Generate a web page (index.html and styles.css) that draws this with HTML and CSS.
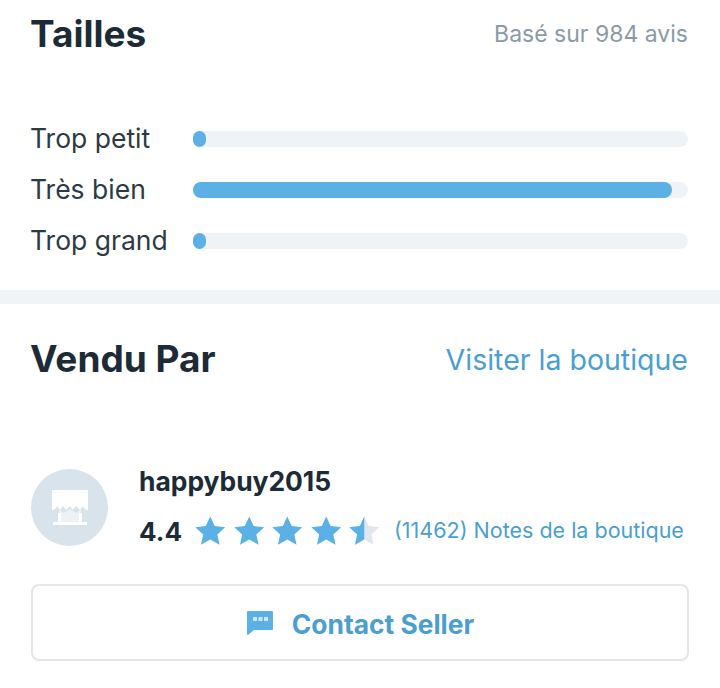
FILE: index.html
```html
<!DOCTYPE html>
<html lang="fr">
<head>
    <meta charset="UTF-8">
    <title>Tailles</title>
    <link rel="stylesheet" href="styles.css">
</head>
<body>
    <section class="sizes">
        <div class="section-head">
            <h2>Tailles</h2>
            <span class="review-count">Basé sur 984 avis</span>
        </div>
        <div class="size-rows">
            <div class="size-row">
                <span class="size-label">Trop petit</span>
                <div class="bar"><div class="bar-fill" style="width: 2.6%"></div></div>
            </div>
            <div class="size-row">
                <span class="size-label">Très bien</span>
                <div class="bar"><div class="bar-fill" style="width: 96.8%"></div></div>
            </div>
            <div class="size-row">
                <span class="size-label">Trop grand</span>
                <div class="bar"><div class="bar-fill" style="width: 2.6%"></div></div>
            </div>
        </div>
    </section>
    <section class="seller">
        <div class="section-head">
            <h2>Vendu Par</h2>
            <a class="shop-link">Visiter la boutique</a>
        </div>
        <div class="seller-info">
            <div class="avatar">
                <svg width="40" height="38" viewBox="0 0 40 38">
                    <path d="M2 1h36v20c-2 0-4-1-5-4l-3 4-4-4-3 4-3-4-4 4-3-4-3 4-3-4c-1 3-3 4-5 4z" fill="#fff"/>
                    <path d="M9 20l5 4 6-4 6 4 5-4v13H9z" fill="#edf2f6"/>
                    <path d="M8 24h3v9h18v-9h3v9h5v3H3v-3h5z" fill="#fff"/>
                </svg>
            </div>
            <div class="seller-text">
                <div class="seller-name">happybuy2015</div>
                <div class="rating">
                    <span class="rating-value">4.4</span>
                    <div class="stars">
                        <svg class="star" viewBox="0 0 32 32"><path class="star-on" d="M16 1.5l4.4 9.6 10.5 1.2-7.8 7.1 2.2 10.4L16 24.6l-9.3 5.2 2.2-10.4-7.8-7.1 10.5-1.2z"/></svg>
                        <svg class="star" viewBox="0 0 32 32"><path class="star-on" d="M16 1.5l4.4 9.6 10.5 1.2-7.8 7.1 2.2 10.4L16 24.6l-9.3 5.2 2.2-10.4-7.8-7.1 10.5-1.2z"/></svg>
                        <svg class="star" viewBox="0 0 32 32"><path class="star-on" d="M16 1.5l4.4 9.6 10.5 1.2-7.8 7.1 2.2 10.4L16 24.6l-9.3 5.2 2.2-10.4-7.8-7.1 10.5-1.2z"/></svg>
                        <svg class="star" viewBox="0 0 32 32"><path class="star-on" d="M16 1.5l4.4 9.6 10.5 1.2-7.8 7.1 2.2 10.4L16 24.6l-9.3 5.2 2.2-10.4-7.8-7.1 10.5-1.2z"/></svg>
                        <svg class="star" viewBox="0 0 32 32"><path class="star-off" d="M16 1.5l4.4 9.6 10.5 1.2-7.8 7.1 2.2 10.4L16 24.6l-9.3 5.2 2.2-10.4-7.8-7.1 10.5-1.2z"/><path class="star-on" d="M16 1.5v23.1l-9.3 5.2 2.2-10.4-7.8-7.1 10.5-1.2z"/></svg>
                    </div>
                    <span class="rating-count">(11462) Notes de la boutique</span>
                </div>
            </div>
        </div>
        <button class="contact-btn">
            <svg width="28" height="26" viewBox="0 0 28 26">
                <path d="M2 1h24a1 1 0 0 1 1 1v17a1 1 0 0 1-1 1H8l-6 5a1 1 0 0 1-1-1V2a1 1 0 0 1 1-1z" fill="#5bb0e6"/>
                <rect x="7" y="7" width="4" height="4" fill="#cfe6f6"/>
                <rect x="12.5" y="7" width="4" height="4" fill="#cfe6f6"/>
                <rect x="18" y="7" width="4" height="4" fill="#cfe6f6"/>
            </svg>
            <span class="contact-text">Contact Seller</span>
        </button>
    </section>
</body>
</html>
```
FILE: styles.css
```css
body {
    margin: 0;
    background: #fff;
    font-family: "Inter", "Lato", sans-serif;
    color: #1c2b36;
}
h2 {
    margin: 0 0 0 -1px;
    font-size: 37px;
    font-weight: 700;
    line-height: 44px;
}
.section-head {
    display: flex;
    justify-content: space-between;
    align-items: center;
}
.sizes {
    padding: 12px 32px 35px 31px;
    border-bottom: 14px solid #f1f4f6;
}
.review-count {
    font-size: 23px;
    color: #8a9aa6;
}
.size-rows {
    margin-top: 69px;
    display: flex;
    flex-direction: column;
    gap: 23px;
}
.size-row {
    display: flex;
    align-items: center;
    height: 28px;
}
.size-label {
    width: 163px;
    margin: -2px 0 0 -1px;
    font-size: 26.5px;
    color: #2b3a44;
}
.bar {
    flex: 1;
    height: 16px;
    background: #f0f3f5;
    border-radius: 8px;
}
.bar-fill {
    height: 100%;
    background: #5bb0e6;
    border-radius: 8px;
}
.seller {
    padding: 33px 31px 0 31px;
}
.shop-link {
    margin-right: 1px;
    font-size: 28.5px;
    color: #4a9fd0;
}
.seller-info {
    display: flex;
    align-items: center;
    margin-top: 87px;
}
.avatar {
    width: 77px;
    height: 77px;
    border-radius: 50%;
    background: #d8e3ec;
    display: flex;
    align-items: center;
    justify-content: center;
}
.seller-text {
    margin: -4px 0 0 31px;
}
.seller-name {
    font-size: 26.4px;
    font-weight: 700;
    line-height: 34px;
}
.rating {
    display: flex;
    align-items: center;
    margin-top: 17px;
}
.rating-value {
    font-size: 26px;
    font-weight: 700;
    width: 52px;
}
.stars {
    display: flex;
    width: 203px;
}
.star {
    width: 38.5px;
    height: 32px;
}
.star-on {
    fill: #5bb0e6;
}
.star-off {
    fill: #dfe7ee;
}
.rating-count {
    margin-top: -3px;
    font-size: 21.5px;
    color: #4a9fd0;
    white-space: nowrap;
}
.contact-btn {
    display: flex;
    align-items: center;
    justify-content: center;
    gap: 18px;
    width: 100%;
    height: 77px;
    margin-top: 37px;
    background: #fff;
    border: 2px solid #e3e6e8;
    border-radius: 8px;
    font-family: inherit;
    font-size: 26.4px;
    font-weight: 700;
    color: #4a9fd0;
}
.contact-text {
    padding-top: 2px;
}
```
